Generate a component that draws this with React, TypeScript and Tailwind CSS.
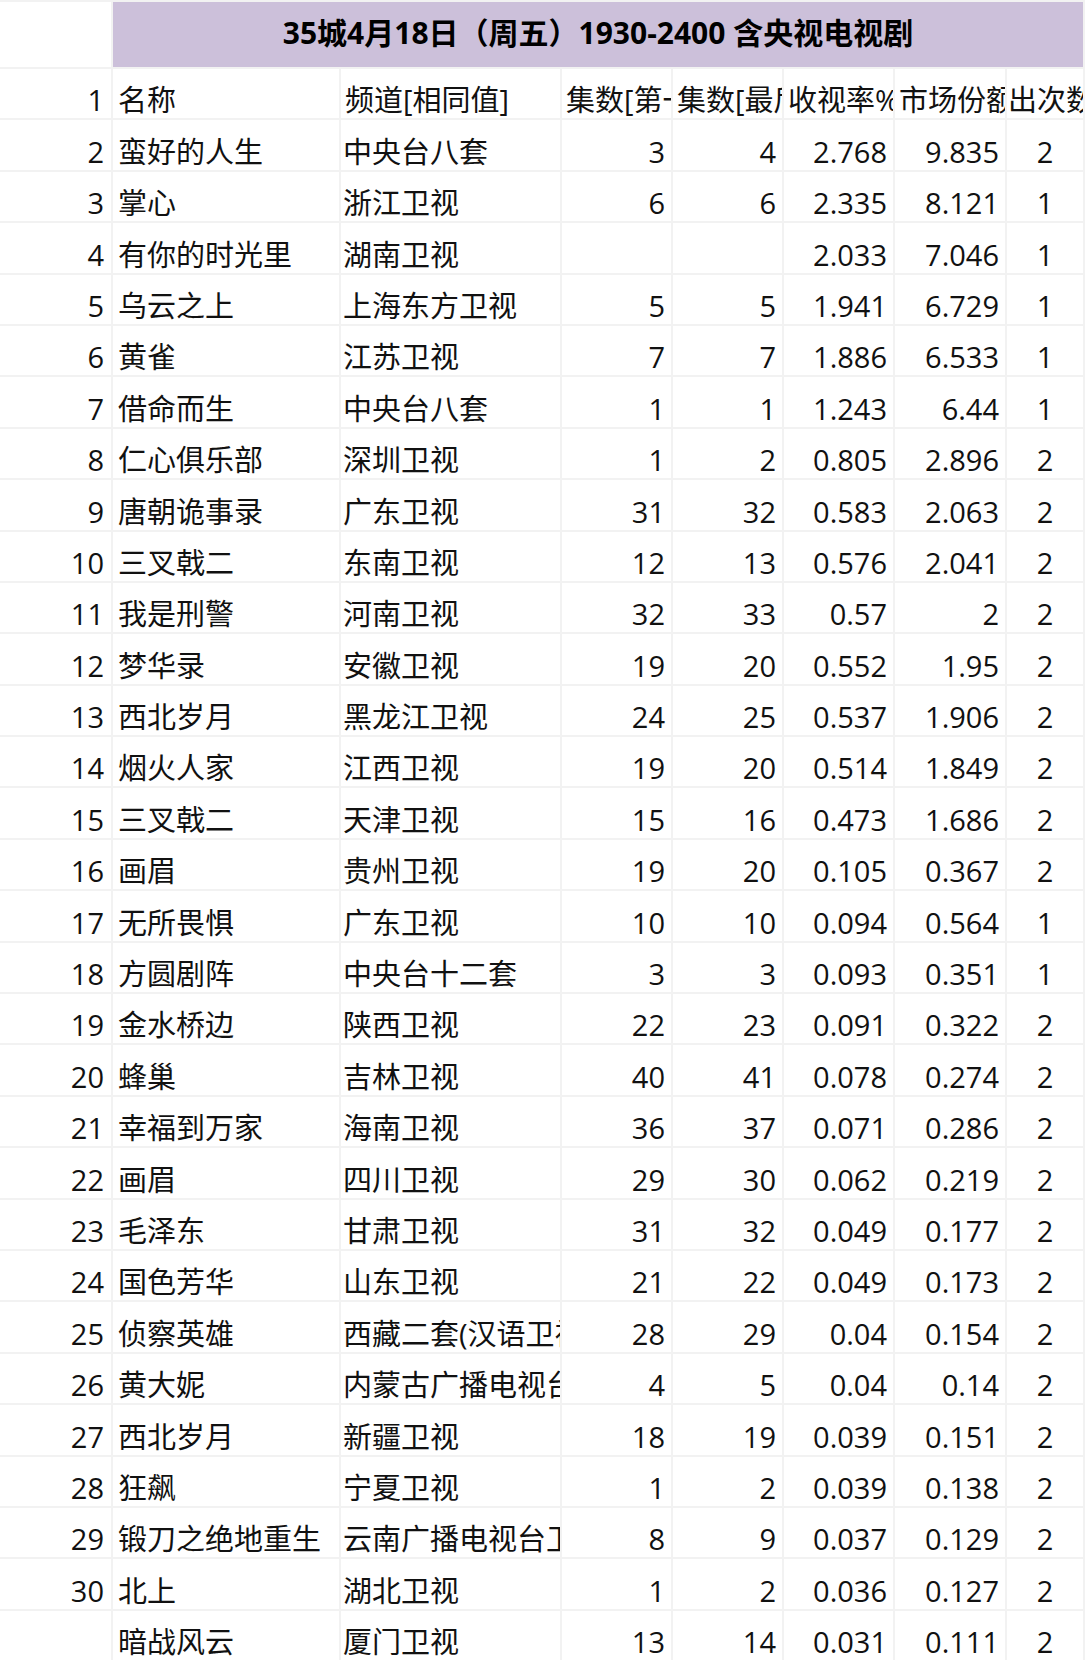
const header = ['名称', '频道[相同值]', '集数[第一集]', '集数[最后一集]', '收视率%', '市场份额%', '出次数']

const rows: [string, string, string, string, string, string, string, string][] = [
  ['2', '蛮好的人生', '中央台八套', '3', '4', '2.768', '9.835', '2'],
  ['3', '掌心', '浙江卫视', '6', '6', '2.335', '8.121', '1'],
  ['4', '有你的时光里', '湖南卫视', '', '', '2.033', '7.046', '1'],
  ['5', '乌云之上', '上海东方卫视', '5', '5', '1.941', '6.729', '1'],
  ['6', '黄雀', '江苏卫视', '7', '7', '1.886', '6.533', '1'],
  ['7', '借命而生', '中央台八套', '1', '1', '1.243', '6.44', '1'],
  ['8', '仁心俱乐部', '深圳卫视', '1', '2', '0.805', '2.896', '2'],
  ['9', '唐朝诡事录', '广东卫视', '31', '32', '0.583', '2.063', '2'],
  ['10', '三叉戟二', '东南卫视', '12', '13', '0.576', '2.041', '2'],
  ['11', '我是刑警', '河南卫视', '32', '33', '0.57', '2', '2'],
  ['12', '梦华录', '安徽卫视', '19', '20', '0.552', '1.95', '2'],
  ['13', '西北岁月', '黑龙江卫视', '24', '25', '0.537', '1.906', '2'],
  ['14', '烟火人家', '江西卫视', '19', '20', '0.514', '1.849', '2'],
  ['15', '三叉戟二', '天津卫视', '15', '16', '0.473', '1.686', '2'],
  ['16', '画眉', '贵州卫视', '19', '20', '0.105', '0.367', '2'],
  ['17', '无所畏惧', '广东卫视', '10', '10', '0.094', '0.564', '1'],
  ['18', '方圆剧阵', '中央台十二套', '3', '3', '0.093', '0.351', '1'],
  ['19', '金水桥边', '陕西卫视', '22', '23', '0.091', '0.322', '2'],
  ['20', '蜂巢', '吉林卫视', '40', '41', '0.078', '0.274', '2'],
  ['21', '幸福到万家', '海南卫视', '36', '37', '0.071', '0.286', '2'],
  ['22', '画眉', '四川卫视', '29', '30', '0.062', '0.219', '2'],
  ['23', '毛泽东', '甘肃卫视', '31', '32', '0.049', '0.177', '2'],
  ['24', '国色芳华', '山东卫视', '21', '22', '0.049', '0.173', '2'],
  ['25', '侦察英雄', '西藏二套(汉语卫视)', '28', '29', '0.04', '0.154', '2'],
  ['26', '黄大妮', '内蒙古广播电视台汉语卫视', '4', '5', '0.04', '0.14', '2'],
  ['27', '西北岁月', '新疆卫视', '18', '19', '0.039', '0.151', '2'],
  ['28', '狂飙', '宁夏卫视', '1', '2', '0.039', '0.138', '2'],
  ['29', '锻刀之绝地重生', '云南广播电视台卫视', '8', '9', '0.037', '0.129', '2'],
  ['30', '北上', '湖北卫视', '1', '2', '0.036', '0.127', '2'],
  ['', '暗战风云', '厦门卫视', '13', '14', '0.031', '0.111', '2'],
]

// excel-ish cell: text sits low in the row, clipped at the grid line
const cell = 'bg-white h-[49.4px] flex items-end overflow-hidden whitespace-nowrap leading-[36px]'

export default function App() {
  return (
    <div className="w-[1087px] min-h-[1663px] bg-white text-[29px] text-[#111] font-['Open_Sans','Noto_Sans_CJK_SC',sans-serif]">
      <div className="w-[1085px] bg-[#f2f2f2] pt-[2px] pr-[2px] grid grid-cols-[111px_226px_219px_109px_109px_109px_110px_76px] gap-[2px]">
        {/* title row */}
        <div className="bg-white h-[65px]" />
        <div className="col-span-7 h-[65px] pb-[4px] bg-[#ccc0da] flex items-center justify-center font-bold text-[30px] text-black whitespace-nowrap">
          35城4月18日（周五）1930-2400 含央视电视剧
        </div>

        {/* column header row */}
        <div className={`${cell} justify-end pr-[7px]`}>1</div>
        {header.map((h, i) => (
          <div key={h} className={`${cell} ${i === 0 ? 'pl-[5px]' : i === 6 ? 'pl-[1px]' : 'pl-[4px]'}`}>
            {h}
          </div>
        ))}

        {rows.map((r, idx) => (
          <div key={idx} className="contents">
            <div className={`${cell} justify-end pr-[7px]`}>{r[0]}</div>
            <div className={`${cell} pl-[5px]`}>{r[1]}</div>
            <div className={`${cell} pl-[2px]`}>{r[2]}</div>
            <div className={`${cell} justify-end pr-[6px]`}>{r[3]}</div>
            <div className={`${cell} justify-end pr-[6px]`}>{r[4]}</div>
            <div className={`${cell} justify-end pr-[6px]`}>{r[5]}</div>
            <div className={`${cell} justify-end pr-[6px]`}>{r[6]}</div>
            <div className={`${cell} justify-center`}>{r[7]}</div>
          </div>
        ))}
      </div>
    </div>
  )
}
